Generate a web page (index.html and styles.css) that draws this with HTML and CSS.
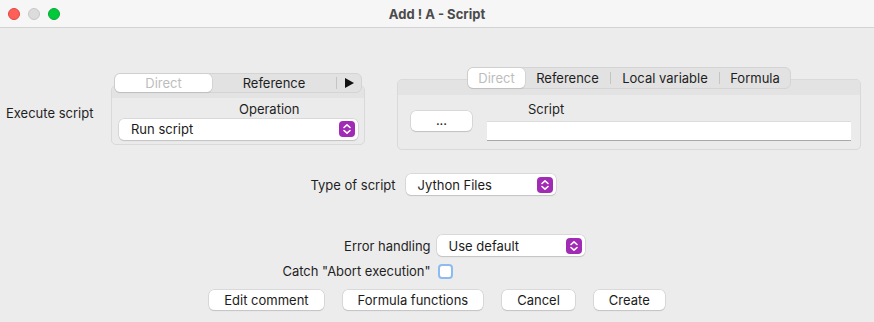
FILE: index.html
```html
<!DOCTYPE html>
<html lang="en">
<head>
  <meta charset="UTF-8" />
  <title>Add ! A - Script</title>
  <link rel="stylesheet" href="styles.css">
</head>
<body>

<div class="window">
  <div class="titlebar">
    <div class="lights">
      <span class="light red"></span>
      <span class="light grey"></span>
      <span class="light green"></span>
    </div>
    <div class="title">Add ! A - Script</div>
  </div>

  <div class="content">
    <div class="main-row">
      <div class="row-label">Execute script</div>

      <div class="group group-left">
        <div class="tabs">
          <div class="tab selected w-direct-l">Direct</div>
          <div class="tab w-ref-l">Reference</div>
          <div class="sep"></div>
          <div class="tab w-arrow">
            <svg width="9" height="10" viewBox="0 0 9 10"><path d="M0 0 L9 5 L0 10 Z" fill="#111"/></svg>
          </div>
        </div>
        <div class="box">
          <div class="box-band"></div>
          <div class="box-body left-body">
            <div class="op-label">Operation</div>
            <div class="select sel-run">
              <span>Run script</span>
              <span class="stepper">
                <svg width="16" height="16" viewBox="0 0 16 16"><path d="M5 6.5 L8 3.8 L11 6.5 M5 9.5 L8 12.2 L11 9.5" stroke="#fff" stroke-width="1.6" fill="none" stroke-linecap="round" stroke-linejoin="round"/></svg>
              </span>
            </div>
          </div>
        </div>
      </div>

      <div class="group group-right">
        <div class="tabs">
          <div class="tab selected w-direct-r">Direct</div>
          <div class="tab w-ref-r">Reference</div>
          <div class="sep"></div>
          <div class="tab w-local">Local variable</div>
          <div class="sep"></div>
          <div class="tab w-formula">Formula</div>
        </div>
        <div class="box">
          <div class="box-band band-right"></div>
          <div class="box-body right-body">
            <div class="btn btn-dots">...</div>
            <div class="field-col">
              <div class="field-label">Script</div>
              <div class="field"></div>
            </div>
          </div>
        </div>
      </div>
    </div>

    <div class="type-row">
      <div class="label">Type of script</div>
      <div class="select sel-type">
        <span>Jython Files</span>
        <span class="stepper">
          <svg width="16" height="16" viewBox="0 0 16 16"><path d="M5 6.5 L8 3.8 L11 6.5 M5 9.5 L8 12.2 L11 9.5" stroke="#fff" stroke-width="1.6" fill="none" stroke-linecap="round" stroke-linejoin="round"/></svg>
        </span>
      </div>
    </div>

    <div class="opts">
      <div class="label">Error handling</div>
      <div class="select sel-err">
        <span>Use default</span>
        <span class="stepper">
          <svg width="16" height="16" viewBox="0 0 16 16"><path d="M5 6.5 L8 3.8 L11 6.5 M5 9.5 L8 12.2 L11 9.5" stroke="#fff" stroke-width="1.6" fill="none" stroke-linecap="round" stroke-linejoin="round"/></svg>
        </span>
      </div>
      <div class="label">Catch "Abort execution"</div>
      <div class="check-cell"><span class="checkbox"></span></div>
    </div>

    <div class="buttons">
      <div class="btn">Edit comment</div>
      <div class="btn">Formula functions</div>
      <div class="btn">Cancel</div>
      <div class="btn">Create</div>
    </div>
  </div>
</div>

</body>
</html>
```

FILE: styles.css
```css
body {
  margin: 0;
  background: #ececec;
  font-family: Inter, 'Liberation Sans', Arial, sans-serif;
  font-size: 13px;
  color: #1f1f1f;
}

.window {
  width: 874px;
  height: 322px;
  overflow: hidden;
}

.titlebar {
  height: 28px;
  box-sizing: border-box;
  background: #f6f6f6;
  border-bottom: 1px solid #d3d3d3;
  display: flex;
  align-items: center;
  position: relative;
}

.lights {
  display: flex;
  gap: 8px;
  padding-left: 8px;
}

.light {
  width: 12px;
  height: 12px;
  border-radius: 50%;
  box-sizing: border-box;
}
.light.red { background: #fe5f57; border: 0.5px solid #e2463f; }
.light.grey { background: #dcdcdc; border: 0.5px solid #c8c8c8; }
.light.green { background: #00c93b; border: 0.5px solid #09a82f; }

.title {
  position: absolute;
  left: 0;
  right: 0;
  text-align: center;
  font-weight: bold;
  color: #4b4b4b;
}

.content {
  padding-top: 39px;
}

.main-row {
  display: flex;
  align-items: center;
}

.row-label {
  width: 111px;
  padding-left: 6px;
  box-sizing: border-box;
  margin-top: 8px;
}

.group {
  display: flex;
  flex-direction: column;
}
.group-left { width: 254px; }
.group-right { width: 464px; margin-left: 32px; }

.tabs {
  position: relative;
  z-index: 1;
  align-self: center;
  display: flex;
  align-items: center;
  height: 20px;
  box-sizing: border-box;
  background: #e2e2e2;
  border: 1px solid #d4d4d4;
  border-radius: 6px;
}
.group-right .tabs { height: 22px; }

.tab {
  height: 100%;
  display: flex;
  align-items: center;
  justify-content: center;
  color: #1e1e1e;
}
.tab.selected {
  background: #fff;
  color: #bdbdbd;
  border-radius: 5px;
  box-shadow: 0 0 0 0.5px #c9c9c9, 0 1px 1px rgba(0,0,0,0.15);
}

.sep {
  width: 1px;
  height: 12px;
  background: #c4c4c4;
}

.w-direct-l { width: 97px; }
.w-ref-l { width: 124px; }
.w-arrow { width: 24px; }
.w-direct-r { width: 57px; }
.w-ref-r { width: 85px; }
.w-local { width: 108px; }
.w-formula { width: 70px; }

.box {
  margin-top: -8px;
  border: 1px solid #d9d9d9;
  border-radius: 5px;
  background: #ebebeb;
  overflow: hidden;
}
.group-right .box { margin-top: -10px; }

.box-band {
  height: 12px;
  background: #e3e3e3;
}
.band-right { height: 15px; }

.left-body {
  padding: 3px 6px 4px 7px;
}

.op-label {
  padding-left: 120px;
  height: 16px;
  line-height: 16px;
  margin-bottom: 2px;
}

.select {
  height: 21px;
  box-sizing: border-box;
  background: #fff;
  border-radius: 5px;
  box-shadow: 0 0 0 0.5px #c6c6c6, 0 1px 1px rgba(0,0,0,0.18);
  display: flex;
  align-items: center;
  justify-content: space-between;
  padding: 0 3px 0 12px;
  color: #1b1b1b;
}

.stepper {
  width: 16px;
  height: 16px;
  border-radius: 4px;
  background: #a22bb6;
  display: flex;
}

.right-body {
  display: flex;
  align-items: center;
  padding: 6px 9px 8px 13px;
}

.btn {
  height: 20px;
  box-sizing: border-box;
  background: #fff;
  border-radius: 5px;
  box-shadow: 0 0 0 0.5px #c6c6c6, 0 1px 1px rgba(0,0,0,0.18);
  display: flex;
  align-items: center;
  justify-content: center;
  padding: 0 16px;
  color: #1b1b1b;
}

.btn-dots {
  width: 61px;
  padding: 0;
  padding-bottom: 3px;
}

.field-col {
  flex: 1;
  margin-left: 15px;
}

.field-label {
  padding-left: 41px;
  height: 16px;
  line-height: 16px;
  margin-bottom: 4px;
}

.field {
  height: 20px;
  background: #fff;
  border-top: 1px solid #dcdcdc;
  border-bottom: 1px solid #a9a9a9;
  box-sizing: border-box;
}

.type-row {
  display: flex;
  align-items: center;
  justify-content: center;
  gap: 10px;
  margin-top: 24px;
  padding-right: 8px;
}

.sel-type { width: 150px; }

.opts {
  display: grid;
  grid-template-columns: auto 148px;
  justify-content: center;
  align-items: center;
  column-gap: 6px;
  row-gap: 7px;
  margin-top: 40px;
  padding-right: 7px;
}

.opts .label { text-align: right; }

.sel-err { width: 148px; }

.check-cell {
  display: flex;
  height: 16px;
  align-items: center;
}

.checkbox {
  width: 15px;
  height: 15px;
  box-sizing: border-box;
  background: #fff;
  border: 2.5px solid #8dbaf0;
  border-radius: 4px;
  margin-left: 1px;
}

.buttons {
  display: flex;
  justify-content: center;
  gap: 19px;
  margin-top: 11px;
}

.buttons .btn { padding: 0 15px; }
```
